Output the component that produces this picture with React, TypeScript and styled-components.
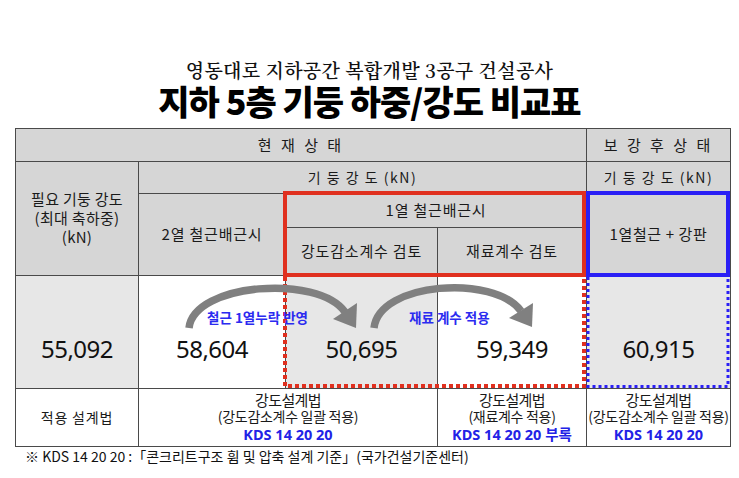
import React from "react";
import styled, { createGlobalStyle } from "styled-components";

const KR = `"Malgun Gothic", "Noto Sans CJK KR", "Noto Sans", sans-serif`;
const NUM = `"Noto Sans", "Noto Sans CJK KR", sans-serif`;

const GlobalStyle = createGlobalStyle`
  html, body { margin: 0; padding: 0; background: #ffffff; }
  body { font-family: ${KR}; color: #111; }
`;

const Page = styled.div`
  width: 739px;
  height: 478px;
  padding-top: 58px;
  box-sizing: border-box;
  overflow: hidden;
`;

const SubTitle = styled.div`
  font-family: "Noto Serif CJK KR", "Noto Serif KR", "Noto Sans CJK KR", serif;
  font-size: 19px;
  line-height: 24px;
  font-weight: 600;
  text-align: center;
  letter-spacing: 0.3px;
  color: #111;
`;

const Title = styled.h1`
  margin: 0 0 9px;
  font-family: ${KR};
  font-size: 34px;
  line-height: 37px;
  font-weight: 900;
  text-align: center;
  letter-spacing: -1px;
  color: #000;
`;

const Table = styled.div`
  position: relative;
  margin-left: 15px;
  width: max-content;
  display: grid;
  grid-template-columns: 122px 146px 151px 148px 143px;
  grid-template-rows: 32px 31px 33px 47px 112px 57px;
  gap: 1px;
  padding: 1px;
  background: #4a4a4a;
`;

type CellProps = {
  $col: string;
  $row: string;
  $bg?: string;
  $size?: number;
  $spacing?: number;
};

const Cell = styled.div<CellProps>`
  grid-column: ${(p) => p.$col};
  grid-row: ${(p) => p.$row};
  background: ${(p) => p.$bg ?? "#d6d6d6"};
  display: flex;
  flex-direction: column;
  align-items: center;
  justify-content: center;
  text-align: center;
  font-family: ${KR};
  font-size: ${(p) => p.$size ?? 15}px;
  letter-spacing: ${(p) => p.$spacing ?? 0.5}px;
  line-height: 1.25;
  color: #1a1a1a;
  white-space: nowrap;
`;

const NumCell = styled(Cell)`
  padding-top: 34px;
  box-sizing: border-box;
  font-family: ${NUM};
  font-size: 24px;
  letter-spacing: -0.5px;
  color: #111;
`;

const MethodLine = styled.span`
  font-size: 15px;
  line-height: 16px;
  letter-spacing: -0.6px;
  color: #1a1a1a;
`;

const MethodNote = styled.span`
  font-size: 14px;
  line-height: 16px;
  letter-spacing: -0.3px;
  color: #1a1a1a;
`;

const CodeRef = styled.span`
  font-family: ${NUM};
  font-size: 14.5px;
  line-height: 20px;
  font-weight: 700;
  letter-spacing: 0;
  color: #2222e6;
`;

const Overlay = styled.svg`
  position: absolute;
  left: 0;
  top: 0;
  pointer-events: none;
`;

const ArrowLabel = styled.div<{ $left: number }>`
  position: absolute;
  left: ${(p) => p.$left}px;
  top: 181px;
  font-family: ${KR};
  font-size: 13.5px;
  line-height: 16px;
  font-weight: 700;
  color: #2b2bf0;
  white-space: nowrap;
  pointer-events: none;
`;

const Footnote = styled.div`
  margin: 0 0 0 25px;
  font-family: ${KR};
  font-size: 14px;
  line-height: 19px;
  color: #111;
  white-space: nowrap;
`;

const RED = "#e0301f";
const BLUE = "#2a1ff5";
const ARROW = "#808080";

function CurvedArrow({ d, base1, base2, tip }: { d: string; base1: string; base2: string; tip: string }) {
  return (
    <g>
      <path d={d} fill="none" stroke={ARROW} strokeWidth={7.5} strokeLinecap="butt" />
      <polygon points={`${base1} ${tip} ${base2}`} fill={ARROW} />
    </g>
  );
}

export default function App() {
  return (
    <>
      <GlobalStyle />
      <Page>
        <SubTitle>영동대로 지하공간 복합개발 3공구 건설공사</SubTitle>
        <Title>지하 5층 기둥 하중/강도 비교표</Title>
        <Table>
          <Cell $col="1 / 5" $row="1" $size={15} $spacing={3}>현 재 상 태</Cell>
          <Cell $col="5" $row="1" $size={15} $spacing={3}>보 강 후 상 태</Cell>

          <Cell $col="1" $row="2 / 5" $size={15} $spacing={0.3}>
            <span>필요 기둥 강도</span>
            <span>(최대 축하중)</span>
            <span>(kN)</span>
          </Cell>
          <Cell $col="2 / 5" $row="2" $size={14} $spacing={1.5}>기 둥 강 도 (kN)</Cell>
          <Cell $col="5" $row="2" $size={14} $spacing={1.5}>기 둥 강 도 (kN)</Cell>

          <Cell $col="2" $row="3 / 5" $spacing={0.8}>2열 철근배근시</Cell>
          <Cell $col="3 / 5" $row="3" $spacing={0.8}>1열 철근배근시</Cell>
          <Cell $col="5" $row="3 / 5" $size={15} $spacing={0.6}>1열철근 + 강판</Cell>

          <Cell $col="3" $row="4" $spacing={0.8}>강도감소계수 검토</Cell>
          <Cell $col="4" $row="4" $spacing={0.8}>재료계수 검토</Cell>

          <NumCell $col="1" $row="5" $bg="#e7e7e7">55,092</NumCell>
          <NumCell $col="2" $row="5" $bg="#ffffff">58,604</NumCell>
          <NumCell $col="3" $row="5" $bg="#e7e7e7">50,695</NumCell>
          <NumCell $col="4" $row="5" $bg="#ffffff">59,349</NumCell>
          <NumCell $col="5" $row="5" $bg="#e7e7e7">60,915</NumCell>

          <Cell $col="1" $row="6" $bg="#ffffff" $size={14} $spacing={0.8}>적용 설계법</Cell>
          <Cell $col="2 / 4" $row="6" $bg="#ffffff">
            <MethodLine>강도설계법</MethodLine>
            <MethodNote>(강도감소계수 일괄 적용)</MethodNote>
            <CodeRef>KDS 14 20 20</CodeRef>
          </Cell>
          <Cell $col="4" $row="6" $bg="#ffffff">
            <MethodLine>강도설계법</MethodLine>
            <MethodNote>(재료계수 적용)</MethodNote>
            <CodeRef>KDS 14 20 20 부록</CodeRef>
          </Cell>
          <Cell $col="5" $row="6" $bg="#ffffff">
            <MethodLine>강도설계법</MethodLine>
            <MethodNote>(강도감소계수 일괄 적용)</MethodNote>
            <CodeRef>KDS 14 20 20</CodeRef>
          </Cell>

          <Overlay width={716} height={319} viewBox="0 0 716 319">
            <rect x={270} y={65} width={299} height={82} fill="none" stroke={RED} strokeWidth={4} />
            <path
              d="M270 149 L270 258 L569 258 L569 149"
              fill="none"
              stroke={RED}
              strokeWidth={4}
              strokeDasharray="4 3"
            />
            <rect x={573} y={65} width={140} height={82} fill="none" stroke={BLUE} strokeWidth={4} />
            <path
              d="M573 149 L573 258.5 L713 258.5 L713 149"
              fill="none"
              stroke={BLUE}
              strokeWidth={3}
              strokeDasharray="3 3"
            />
            <g transform="translate(-15,-128)">
              <CurvedArrow
                d="M189 328 C 194 283, 318 274, 345 312"
                base1="333,319"
                base2="357,303"
                tip="356,328"
              />
              <CurvedArrow
                d="M374 328 C 379 282, 494 274, 521 311"
                base1="509,318"
                base2="533,303"
                tip="532,327"
              />
            </g>
          </Overlay>
          <ArrowLabel $left={192}>철근 1열누락 반영</ArrowLabel>
          <ArrowLabel $left={394}>재료 계수 적용</ArrowLabel>
        </Table>
        <Footnote>※ KDS 14 20 20 :「콘크리트구조 휨 및 압축 설계 기준」(국가건설기준센터)</Footnote>
      </Page>
    </>
  );
}
